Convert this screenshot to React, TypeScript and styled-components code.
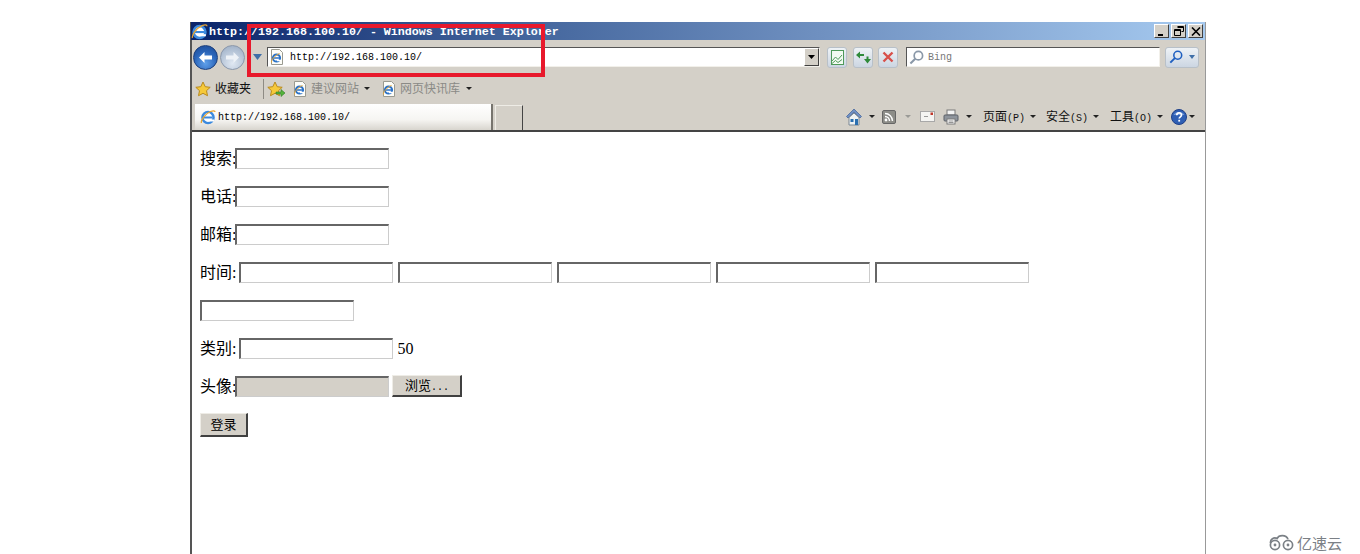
import React from 'react'
import styled, { createGlobalStyle } from 'styled-components'

const GlobalStyle = createGlobalStyle`
    html, body {
        margin: 0;
        padding: 0;
        background: #fff;
        overflow: hidden;
    }
    body {
        font-family: "Liberation Serif", "Noto Sans CJK SC", serif;
    }
`

const CJK = `"Noto Sans CJK SC", sans-serif`
const MONO = `"Liberation Mono", "Noto Sans CJK SC", monospace`

const Page = styled.div`
    position: relative;
    width: 1360px;
    height: 554px;
    padding: 22px 0 0 190px;
    box-sizing: border-box;
    overflow: hidden;
`

const Window = styled.div`
    width: 1016px;
    height: 532px;
    box-sizing: border-box;
    border-left: 2px solid #555;
    border-right: 1px solid #999;
    background: #fff;
    display: flex;
    flex-direction: column;
`

const TitleBar = styled.div`
    height: 18px;
    flex: none;
    margin-left: -1px;
    display: flex;
    align-items: center;
    background: linear-gradient(90deg, #0a246a 0%, #3f6199 30%, #6f90c0 62%, #a6caf0 100%);
`

const TitleText = styled.span`
    font: bold 11.67px ${MONO};
    color: #fff;
    margin-left: 1px;
    padding-top: 2px;
    white-space: pre;
`

const WindowButtons = styled.div`
    margin-left: auto;
    margin-right: 2px;
    display: flex;
    gap: 2px;
`

const WindowButton = styled.div`
    width: 15px;
    height: 14px;
    box-sizing: border-box;
    background: #d4d0c8;
    border: 1px solid;
    border-color: #fff #404040 #404040 #fff;
    display: flex;
    align-items: center;
    justify-content: center;
`

const Chrome = styled.div`
    background: #d4d0c8;
    flex: none;
    border-bottom: 2px solid #444;
`

const AddressRow = styled.div`
    height: 34px;
    display: flex;
    align-items: center;
    padding-left: 1px;
`

const NavCircle = styled.div<{ $active?: boolean }>`
    width: 25px;
    height: 25px;
    border-radius: 50%;
    flex: none;
    margin-right: 2px;
    box-sizing: border-box;
    border: 1px solid ${p => (p.$active ? '#1c3f7c' : '#8a97aa')};
    background: ${p =>
        p.$active
            ? 'radial-gradient(circle at 50% 75%, #5fa0ea 0%, #2a64b8 55%, #1c4a94 100%)'
            : 'radial-gradient(circle at 50% 75%, #e0e8f2 0%, #b4c3d6 60%, #98a9c0 100%)'};
    display: flex;
    align-items: center;
    justify-content: center;
`

const FieldBox = styled.div<{ $width: number; $gap: number }>`
    width: ${p => p.$width}px;
    margin-left: ${p => p.$gap}px;
    height: 20px;
    flex: none;
    box-sizing: border-box;
    background: #fff;
    border: 1px solid;
    border-color: #555 #f2f0ea #f2f0ea #555;
    display: flex;
    align-items: center;
`

const AddressText = styled.span`
    font: 10px ${MONO};
    color: #000;
    margin-left: 6px;
`

const SearchHint = styled.span`
    font: 10px ${MONO};
    color: #777;
    margin-left: 4px;
`

const ComboButton = styled.div`
    margin-left: auto;
    width: 15px;
    height: 18px;
    box-sizing: border-box;
    background: #d4d0c8;
    border: 1px solid;
    border-color: #fff #404040 #404040 #fff;
    display: flex;
    align-items: center;
    justify-content: center;
`

const GlassButton = styled.div<{ $width?: number; $gap: number }>`
    width: ${p => p.$width ?? 20}px;
    height: 21px;
    margin-left: ${p => p.$gap}px;
    flex: none;
    box-sizing: border-box;
    border: 1px solid #b8c0c8;
    border-radius: 3px;
    background: linear-gradient(#eef2f6, #ccd6e2);
    display: flex;
    align-items: center;
    justify-content: center;
`

const FavoritesRow = styled.div`
    height: 29px;
    display: flex;
    align-items: center;
    padding-left: 3px;
`

const FavItem = styled.span<{ $muted?: boolean; $gap?: number }>`
    font: 12px/1 ${CJK};
    color: ${p => (p.$muted ? '#8a8a86' : '#111')};
    margin-left: ${p => p.$gap ?? 4}px;
    padding-bottom: 2px;
    white-space: nowrap;
`

const Separator = styled.div`
    width: 1px;
    height: 20px;
    background: #8e8b84;
    margin: 0 3px 0 12px;
`

const TabRow = styled.div`
    height: 27px;
    display: flex;
    align-items: flex-end;
    padding-left: 3px;
`

const ActiveTab = styled.div`
    width: 298px;
    height: 26px;
    box-sizing: border-box;
    background: linear-gradient(#fff 0%, #f6f5f2 60%, #d8d5ce 100%);
    border-right: 2px solid #77746e;
    display: flex;
    align-items: center;
    padding-left: 5px;
    gap: 2px;
`

const TabText = styled.span`
    font: 10px ${MONO};
    color: #000;
`

const NewTab = styled.div`
    width: 28px;
    height: 25px;
    margin-left: 2px;
    box-sizing: border-box;
    border: 1px solid #eeece6;
    border-right: 1px solid #444;
    border-bottom: none;
`

const Tools = styled.div`
    margin-left: auto;
    margin-right: 10px;
    height: 27px;
    display: flex;
    align-items: center;
`

const ToolLabel = styled.span<{ $gap: number }>`
    font: 12px/1 ${CJK};
    color: #111;
    margin-left: ${p => p.$gap}px;
    white-space: nowrap;
`

const Hotkey = styled.span`
    font-size: 10px;
    font-family: ${MONO};
`

const Caret = styled.span<{ $muted?: boolean; $gap?: number }>`
    width: 0;
    height: 0;
    flex: none;
    margin-left: ${p => p.$gap ?? 5}px;
    border-left: 3px solid transparent;
    border-right: 3px solid transparent;
    border-top: 3px solid ${p => (p.$muted ? '#9a9a96' : '#222')};
`

const IconSlot = styled.span<{ $gap?: number }>`
    display: inline-flex;
    flex: none;
    margin-left: ${p => p.$gap ?? 0}px;
`

const Content = styled.div`
    flex: 1;
    padding: 7px 0 0 8px;
    font-size: 16px;
    color: #000;
`

const FormRow = styled.div<{ $gap?: number }>`
    height: 38px;
    display: flex;
    align-items: center;
    gap: ${p => p.$gap ?? 0}px;
`

const Label = styled.span<{ $pull?: number }>`
    font-family: "Liberation Serif", "Noto Sans CJK SC", serif;
    white-space: pre;
    margin-right: ${p => -(p.$pull ?? 1)}px;
    padding-bottom: 2px;
`

const Suffix = styled.span`
    padding-top: 2px;
    margin-left: -1px;
`

const TextInput = styled.input<{ $disabled?: boolean }>`
    width: 154px;
    height: 21px;
    box-sizing: border-box;
    padding: 0;
    margin: 0;
    flex: none;
    background: ${p => (p.$disabled ? '#d4d0c8' : '#fff')};
    border: 2px solid;
    border-color: #666 #ccc #ccc #666;
    border-width: 2px 1px 1px 2px;
    outline: none;
`

const FormButton = styled.button<{ $width: number; $height: number; $gap?: number; $drop?: number }>`
    width: ${p => p.$width}px;
    height: ${p => p.$height}px;
    margin: ${p => p.$drop ?? 0}px 0 0 ${p => p.$gap ?? 0}px;
    padding: 0 0 ${p => p.$drop ?? 0}px;
    flex: none;
    box-sizing: border-box;
    background: #d4d0c8;
    border: 1px solid;
    border-color: #eeece6 #404040 #404040 #eeece6;
    border-width: 1px 2px 2px 1px;
    font: 13px/1 ${CJK};
    color: #000;
`

const RedFrame = styled.div`
    position: absolute;
    left: 247px;
    top: 24px;
    width: 298px;
    height: 53px;
    box-sizing: border-box;
    border: 4px solid #e8192c;
    pointer-events: none;
`

const Watermark = styled.div`
    position: absolute;
    right: 18px;
    bottom: 3px;
    display: flex;
    align-items: center;
    gap: 2px;
    font: 15px/1 ${CJK};
    color: #7b8086;
`

const IeIcon = ({ size = 16 }: { size?: number }) => (
    <svg width={size} height={size} viewBox="0 0 16 16">
        <circle cx="8" cy="8.5" r="5.6" fill="#fff" stroke="#3c8ade" strokeWidth="2.4" />
        <path d="M3.5 8.5h9" stroke="#3c8ade" strokeWidth="2" />
        <path d="M9 11.5h5" stroke="#fff" strokeWidth="2" />
        <path d="M1.5 14c-1-2 3-9 9-11.5 2.500-1 4.500-1 4.500.5" fill="none" stroke="#e8a531" strokeWidth="1.300" />
    </svg>
)

const PageIeIcon = () => (
    <svg width="15" height="16" viewBox="0 0 15 16">
        <path d="M2.500.5h8l3 3v12h-11z" fill="#fdfdf8" stroke="#9a9a90" />
        <circle cx="7.500" cy="9" r="3.600" fill="#fff" stroke="#2a72c8" strokeWidth="2" />
        <path d="M4.500 9h6" stroke="#2a72c8" strokeWidth="1.500" />
        <path d="M8 11.500h4" stroke="#fff" strokeWidth="1.500" />
        <path d="M2.500 13.500c-.5-2 3-7 8-9" fill="none" stroke="#e8a531" />
    </svg>
)

const StarIcon = ({ plus }: { plus?: boolean }) => (
    <svg width={plus ? 19 : 16} height="16" viewBox={plus ? '0 0 19 16' : '0 0 16 16'}>
        <path d="M8 1l2.200 4.700 5 .6-3.700 3.400 1 5L8 12.300l-4.500 2.400 1-5L.8 6.300l5-.6z" fill="#f6c93a" stroke="#b98a1c" />
        {plus && <path d="M9 11h5V8.500l4 3.500-4 3.500V13H9z" fill="#55b23c" stroke="#2f7d22" strokeWidth=".6" />}
    </svg>
)

const ArrowIcon = ({ flip, color }: { flip?: boolean; color: string }) => (
    <svg width="15" height="13" viewBox="0 0 15 13" style={flip ? { transform: 'scaleX(-1)' } : undefined}>
        <path d="M1 6.500L6.500 1v3.500H14v4H6.500V12z" fill={color} />
    </svg>
)

const HomeIcon = () => (
    <svg width="16" height="18" viewBox="0 0 16 18">
        <path d="M8 1L.5 8.500 2 10l6-6 6 6 1.500-1.500z" fill="#6f8fc4" stroke="#3c5f98" strokeWidth=".7" />
        <path d="M3 9.500L8 5l5 4.500V17H3z" fill="#eef2f4" stroke="#7b8794" />
        <path d="M9 11h3v6H9z" fill="#2a6fb0" />
        <path d="M4.500 11h3v3h-3z" fill="#2a6fb0" />
    </svg>
)

const FeedIcon = () => (
    <svg width="14" height="14" viewBox="0 0 14 14">
        <rect x=".5" y=".5" width="13" height="13" rx="1.500" fill="#8d8d88" stroke="#666" />
        <circle cx="4" cy="10" r="1.400" fill="#fff" />
        <path d="M3 6.500a4.500 4.500 0 0 1 4.500 4.500M3 3.500a7.500 7.500 0 0 1 7.500 7.500" fill="none" stroke="#fff" strokeWidth="1.400" />
    </svg>
)

const MailIcon = () => (
    <svg width="15" height="11" viewBox="0 0 15 11">
        <rect x=".5" y=".5" width="14" height="10" fill="#f4f4f2" stroke="#a8a8a8" />
        <path d="M4 5.500h4" stroke="#9a9a9a" />
        <rect x="10.500" y="1.500" width="2.500" height="2.500" fill="#c0392b" />
    </svg>
)

const PrintIcon = () => (
    <svg width="16" height="16" viewBox="0 0 16 16">
        <rect x="4" y="1" width="8" height="5" fill="#f4f4f4" stroke="#7a7a7a" />
        <rect x="1" y="6" width="14" height="6" rx="1" fill="#8e949c" stroke="#5c6168" />
        <rect x="4" y="10" width="8" height="5" fill="#fff" stroke="#7a7a7a" />
        <path d="M5.500 12h5M5.500 13.500h5" stroke="#666" strokeWidth=".7" />
    </svg>
)

const HelpIcon = () => (
    <svg width="16" height="16" viewBox="0 0 16 16">
        <circle cx="8" cy="8" r="7.500" fill="#2f5fb4" stroke="#1f4088" />
        <path d="M2.500 6a6 5 0 0 1 11 0z" fill="#8fb0e6" opacity=".7" />
        <path d="M5.800 6.200c0-3 4.700-3 4.700-.2 0 1.800-2.300 1.800-2.300 3.600" fill="none" stroke="#fff" strokeWidth="1.700" />
        <rect x="7.300" y="10.800" width="1.800" height="1.800" fill="#fff" />
    </svg>
)

const Magnifier = ({ color, size }: { color: string; size: number }) => (
    <svg width={size} height={size} viewBox="0 0 16 16">
        <circle cx="10" cy="6" r="4.500" fill="none" stroke={color} strokeWidth="1.800" />
        <path d="M6.700 9.300L1.500 14.500" stroke={color} strokeWidth="2.200" />
    </svg>
)

// two loops joined by the cloud's top arc
const CloudLogo = () => (
    <svg width="27" height="17" viewBox="0 0 27 17">
        <path d="M2.500 9C2 5 6 3 9 4.500 11 .5 18 .5 20 5" fill="none" stroke="#7b8086" strokeWidth="1.700" />
        <circle cx="7" cy="11" r="4.600" fill="none" stroke="#7b8086" strokeWidth="1.700" />
        <circle cx="20" cy="11" r="4.600" fill="none" stroke="#7b8086" strokeWidth="1.700" />
        <circle cx="7" cy="11" r="1.400" fill="#7b8086" />
        <circle cx="20" cy="11" r="1.400" fill="#7b8086" />
    </svg>
)

const App = () => {
    return (
        <Page>
            <GlobalStyle />
            <Window>
                <TitleBar>
                    <IconSlot><IeIcon size={17} /></IconSlot>
                    <TitleText>http://192.168.100.10/ - Windows Internet Explorer</TitleText>
                    <WindowButtons>
                        <WindowButton>
                            <svg width="9" height="9" viewBox="0 0 9 9"><path d="M1 7h5v2H1z" /></svg>
                        </WindowButton>
                        <WindowButton>
                            <svg width="10" height="10" viewBox="0 0 10 10">
                                <path d="M3.500.5h6v5h-2M.5 3.500h6v6h-6zM3.500 1.500h6M.5 4.500h6" fill="none" stroke="#000" />
                            </svg>
                        </WindowButton>
                        <WindowButton>
                            <svg width="10" height="9" viewBox="0 0 10 9">
                                <path d="M1 .5l8 8M9 .5l-8 8" stroke="#000" strokeWidth="1.600" />
                            </svg>
                        </WindowButton>
                    </WindowButtons>
                </TitleBar>
                <Chrome>
                    <AddressRow>
                        <NavCircle $active><ArrowIcon color="#fff" /></NavCircle>
                        <NavCircle><ArrowIcon flip color="#eef2f7" /></NavCircle>
                        <IconSlot $gap={6}>
                            <svg width="9" height="6" viewBox="0 0 9 6"><path d="M0 0h9L4.500 6z" fill="#3f6fa8" /></svg>
                        </IconSlot>
                        <FieldBox $width={553} $gap={5}>
                            <IconSlot $gap={1}><PageIeIcon /></IconSlot>
                            <AddressText>http://192.168.100.10/</AddressText>
                            <ComboButton>
                                <svg width="7" height="4" viewBox="0 0 7 4"><path d="M0 0h7L3.500 4z" /></svg>
                            </ComboButton>
                        </FieldBox>
                        <GlassButton $gap={7}>
                            <svg width="15" height="15" viewBox="0 0 15 15">
                                <rect x="1.500" y=".5" width="12" height="14" fill="#f2fbf2" stroke="#4f9a5a" />
                                <path d="M2 11l3.500-4 2.500 2.500L12 5M2 13.500l3.500-3 2.500 2 4-3" fill="none" stroke="#4f9a5a" />
                            </svg>
                        </GlassButton>
                        <GlassButton $gap={6}>
                            <svg width="17" height="13" viewBox="0 0 17 13">
                                <path d="M1 4l4-3.500V3h4v2H5v2.500z" fill="#2f8a3a" />
                                <path d="M16 8l-3.500 4.500L9 8h2.500V5.500h2V8z" fill="#2f8a3a" />
                            </svg>
                        </GlassButton>
                        <GlassButton $gap={5}>
                            <svg width="12" height="12" viewBox="0 0 12 12">
                                <path d="M1.500 1.500l9 9M10.500 1.500l-9 9" stroke="#d8504a" strokeWidth="2.400" />
                            </svg>
                        </GlassButton>
                        <FieldBox $width={254} $gap={8}>
                            <IconSlot $gap={2}><Magnifier color="#8a98a8" size={15} /></IconSlot>
                            <SearchHint>Bing</SearchHint>
                        </FieldBox>
                        <GlassButton $gap={5} $width={34}>
                            <IconSlot><Magnifier color="#1f5fc0" size={14} /></IconSlot>
                            <IconSlot $gap={6}>
                                <svg width="6" height="4" viewBox="0 0 6 4"><path d="M0 0h6L3 4z" fill="#3f6fa8" /></svg>
                            </IconSlot>
                        </GlassButton>
                    </AddressRow>
                    <FavoritesRow>
                        <IconSlot><StarIcon /></IconSlot>
                        <FavItem>收藏夹</FavItem>
                        <Separator />
                        <IconSlot><StarIcon plus /></IconSlot>
                        <IconSlot $gap={6}><PageIeIcon /></IconSlot>
                        <FavItem $muted>建议网站</FavItem>
                        <Caret />
                        <IconSlot $gap={11}><PageIeIcon /></IconSlot>
                        <FavItem $muted>网页快讯库</FavItem>
                        <Caret $gap={6} />
                    </FavoritesRow>
                    <TabRow>
                        <ActiveTab>
                            <IeIcon />
                            <TabText>http://192.168.100.10/</TabText>
                        </ActiveTab>
                        <NewTab />
                        <Tools>
                            <IconSlot><HomeIcon /></IconSlot>
                            <Caret $gap={7} />
                            <IconSlot $gap={7}><FeedIcon /></IconSlot>
                            <Caret $muted $gap={9} />
                            <IconSlot $gap={9}><MailIcon /></IconSlot>
                            <IconSlot $gap={8}><PrintIcon /></IconSlot>
                            <Caret $gap={7} />
                            <ToolLabel $gap={11}>页面<Hotkey>(P)</Hotkey></ToolLabel>
                            <Caret />
                            <ToolLabel $gap={10}>安全<Hotkey>(S)</Hotkey></ToolLabel>
                            <Caret />
                            <ToolLabel $gap={11}>工具<Hotkey>(O)</Hotkey></ToolLabel>
                            <Caret />
                            <IconSlot $gap={8}><HelpIcon /></IconSlot>
                            <Caret $gap={2} />
                        </Tools>
                    </TabRow>
                </Chrome>
                <Content>
                    <FormRow>
                        <Label>搜索:</Label>
                        <TextInput />
                    </FormRow>
                    <FormRow>
                        <Label>电话:</Label>
                        <TextInput />
                    </FormRow>
                    <FormRow>
                        <Label>邮箱:</Label>
                        <TextInput />
                    </FormRow>
                    <FormRow $gap={5}>
                        <Label $pull={2}>时间:</Label>
                        <TextInput />
                        <TextInput />
                        <TextInput />
                        <TextInput />
                        <TextInput />
                    </FormRow>
                    <FormRow>
                        <TextInput />
                    </FormRow>
                    <FormRow $gap={5}>
                        <Label $pull={2}>类别:</Label>
                        <TextInput />
                        <Suffix>50</Suffix>
                    </FormRow>
                    <FormRow>
                        <Label>头像:</Label>
                        <TextInput $disabled />
                        <FormButton $width={70} $height={22} $gap={3}>浏览<Hotkey>...</Hotkey></FormButton>
                    </FormRow>
                    <FormRow>
                        <FormButton $width={48} $height={24} $drop={1}>登录</FormButton>
                    </FormRow>
                </Content>
            </Window>
            <RedFrame />
            <Watermark>
                <CloudLogo />
                亿速云
            </Watermark>
        </Page>
    )
}

export default App
